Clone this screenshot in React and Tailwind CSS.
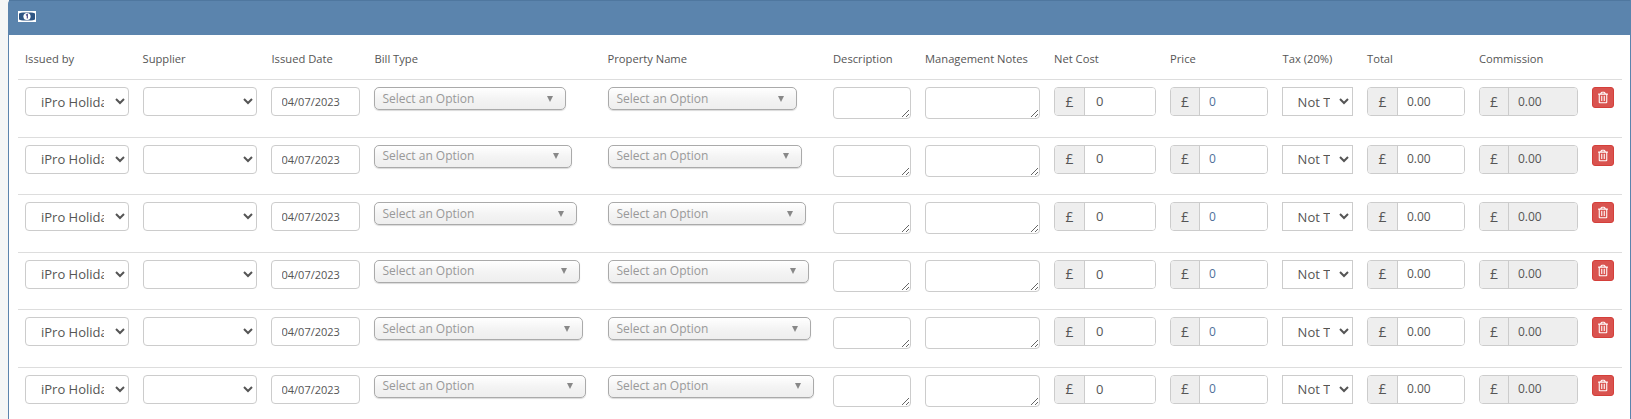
import { FaRegTrashAlt } from "react-icons/fa";

const headers = ["Issued by", "Supplier", "Issued Date", "Bill Type", "Property Name", "Description", "Management Notes", "Net Cost", "Price", "Tax (20%)", "Total", "Commission", ""];

const rows = [
  { bill: "w-[192px]", property: "w-[189.5px]" },
  { bill: "w-[198px]", property: "w-[194.5px]" },
  { bill: "w-[203px]", property: "w-[198.5px]" },
  { bill: "w-[206.5px]", property: "w-[201.5px]" },
  { bill: "w-[209.5px]", property: "w-[203.5px]" },
  { bill: "w-[212.5px]", property: "w-[206.5px]" },
];

const MoneyIcon = () => (
  <svg width="18" height="11" viewBox="0 0 18 11" className="block">
    <rect width="18" height="11" fill="#fff" />
    <path d="M1 2.5 Q3 1.5 5 1.5 H13 Q15 1.5 17 2.5 V8.5 Q15 9.5 13 9.5 H5 Q3 9.5 1 8.5 Z" fill="#2f5583" />
    <circle cx="9" cy="5.5" r="3.6" fill="#fff" />
    <path d="M8 4.2 L9.3 3.4 V7.6" fill="none" stroke="#3d3a7c" strokeWidth="1.1" />
  </svg>
);

const ChosenSelect = ({ width }) => (
  <div className={`${width} h-[23px] flex items-center justify-between pl-2 pr-2 rounded-[5px] border border-[#aaa] bg-gradient-to-b from-white via-[#f4f4f4] to-[#eeeeee] shadow-[0_1px_1px_rgba(0,0,0,0.15)] text-xs text-[#999]`}>
    <span>Select an Option</span>
    <span className="w-0 h-0 mr-1 border-x-[3.5px] border-x-transparent border-t-[6px] border-t-[#888]" />
  </div>
);

const Addon = ({ value, wide, tall, disabled, className }) => (
  <div className={`${wide} h-[29px] flex rounded-[4px] border border-[#ccc] overflow-hidden`}>
    <span className={`flex items-center justify-center bg-[#eee] border-r border-[#ccc] text-[#555] text-sm ${tall ? "w-[30px]" : "w-[29px]"}`}>£</span>
    <input
      readOnly
      value={value}
      disabled={disabled}
      className={`flex-1 min-w-0 pl-[9px] outline-none ${disabled ? "bg-[#eee]" : "bg-white"} ${className}`}
    />
  </div>
);

const Row = ({ bill, property }) => (
  <tr className="h-[57.6px] border-t border-[#ddd] align-top">
    <td className="px-[7px] pt-[7px]">
      <select defaultValue="ipro" className="w-[104px] h-[29px] pl-[11px] pr-[8px] rounded-[4px] border border-[#ccc] bg-white text-[13px] text-[#555]">
        <option value="ipro">iPro Holidays</option>
      </select>
    </td>
    <td className="px-[7px] pt-[7px]">
      <select className="w-[114.5px] h-[29px] pl-3 pr-[6px] rounded-[4px] border border-[#ccc] bg-white text-[13px] text-[#555]">
        <option />
      </select>
    </td>
    <td className="px-[7px] pt-[7px]">
      <input readOnly value="04/07/2023" className="w-[89px] h-[29px] -ml-px pl-[10px] rounded-[4px] border border-[#ccc] bg-white text-[11px] text-[#555] outline-none" />
    </td>
    <td className="px-[7px] pt-[7px]">
      <div className="-ml-px">
        <ChosenSelect width={bill} />
      </div>
    </td>
    <td className="px-[7px] pt-[7px]">
      <ChosenSelect width={property} />
    </td>
    <td className="px-[7px] pt-[7px]">
      <textarea className="block w-[78px] h-[32px] rounded-[4px] border border-[#ccc] bg-white" />
    </td>
    <td className="px-[7px] pt-[7px]">
      <textarea className="block w-[115px] h-[32px] rounded-[4px] border border-[#ccc] bg-white" />
    </td>
    <td className="px-[7px] pt-[7px]">
      <Addon value="0" wide="w-[102px]" tall className="text-[13px] text-[#555] pl-[11px]" />
    </td>
    <td className="px-[7px] pt-[7px]">
      <Addon value="0" wide="w-[98px]" className="text-xs text-[#4f6f9a]" />
    </td>
    <td className="px-[7px] pt-[7px]">
      <select defaultValue="no" className="w-[71px] h-[29px] -ml-px pl-[11px] pr-[6px] border border-[#ccc] bg-white text-[13px] text-[#555]">
        <option value="no">Not Taxable</option>
      </select>
    </td>
    <td className="px-[7px] pt-[7px]">
      <Addon value="0.00" wide="w-[98px]" tall className="text-xs text-[#555]" />
    </td>
    <td className="px-[7px] pt-[7px]">
      <Addon value="0.00" wide="w-[99px]" disabled className="text-xs text-[#555]" />
    </td>
    <td className="px-[7px] pt-[7px]">
      <button className="w-[22px] h-[21px] flex items-center justify-center rounded-[3px] bg-[#d9534f] border border-[#d43f3a] text-white">
        <FaRegTrashAlt className="w-[10px] h-[13px]" />
      </button>
    </td>
  </tr>
);

export default function App() {
  return (
    <div className="h-[419px] overflow-hidden bg-[#f4f6f6] pl-2 font-['Open_Sans',sans-serif]">
      <div className="h-full rounded-tl-[4px] border-x border-[#5b84ad] bg-white">
        <div className="h-[35px] pl-[9px] pt-[10px] bg-[#5b84ad] border-t border-[#4f779f]">
          <MoneyIcon />
        </div>
        <div className="pl-[9px]">
          <table className="table-fixed w-[1604px] border-collapse">
            <colgroup>
              <col className="w-[117.5px]" />
              <col className="w-[129px]" />
              <col className="w-[103px]" />
              <col className="w-[233px]" />
              <col className="w-[225.5px]" />
              <col className="w-[92px]" />
              <col className="w-[129px]" />
              <col className="w-[116px]" />
              <col className="w-[112.6px]" />
              <col className="w-[84.4px]" />
              <col className="w-[112px]" />
              <col className="w-[113px]" />
              <col className="w-[37px]" />
            </colgroup>
            <thead>
              <tr className="h-[44.5px]">
                {headers.map((h) => (
                  <th key={h} className="px-[7px] pt-[5px] text-left text-[11.2px] font-medium text-[#555] whitespace-nowrap">{h}</th>
                ))}
              </tr>
            </thead>
            <tbody>
              {rows.map((r, i) => (
                <Row key={i} bill={r.bill} property={r.property} />
              ))}
            </tbody>
          </table>
        </div>
      </div>
    </div>
  );
}
